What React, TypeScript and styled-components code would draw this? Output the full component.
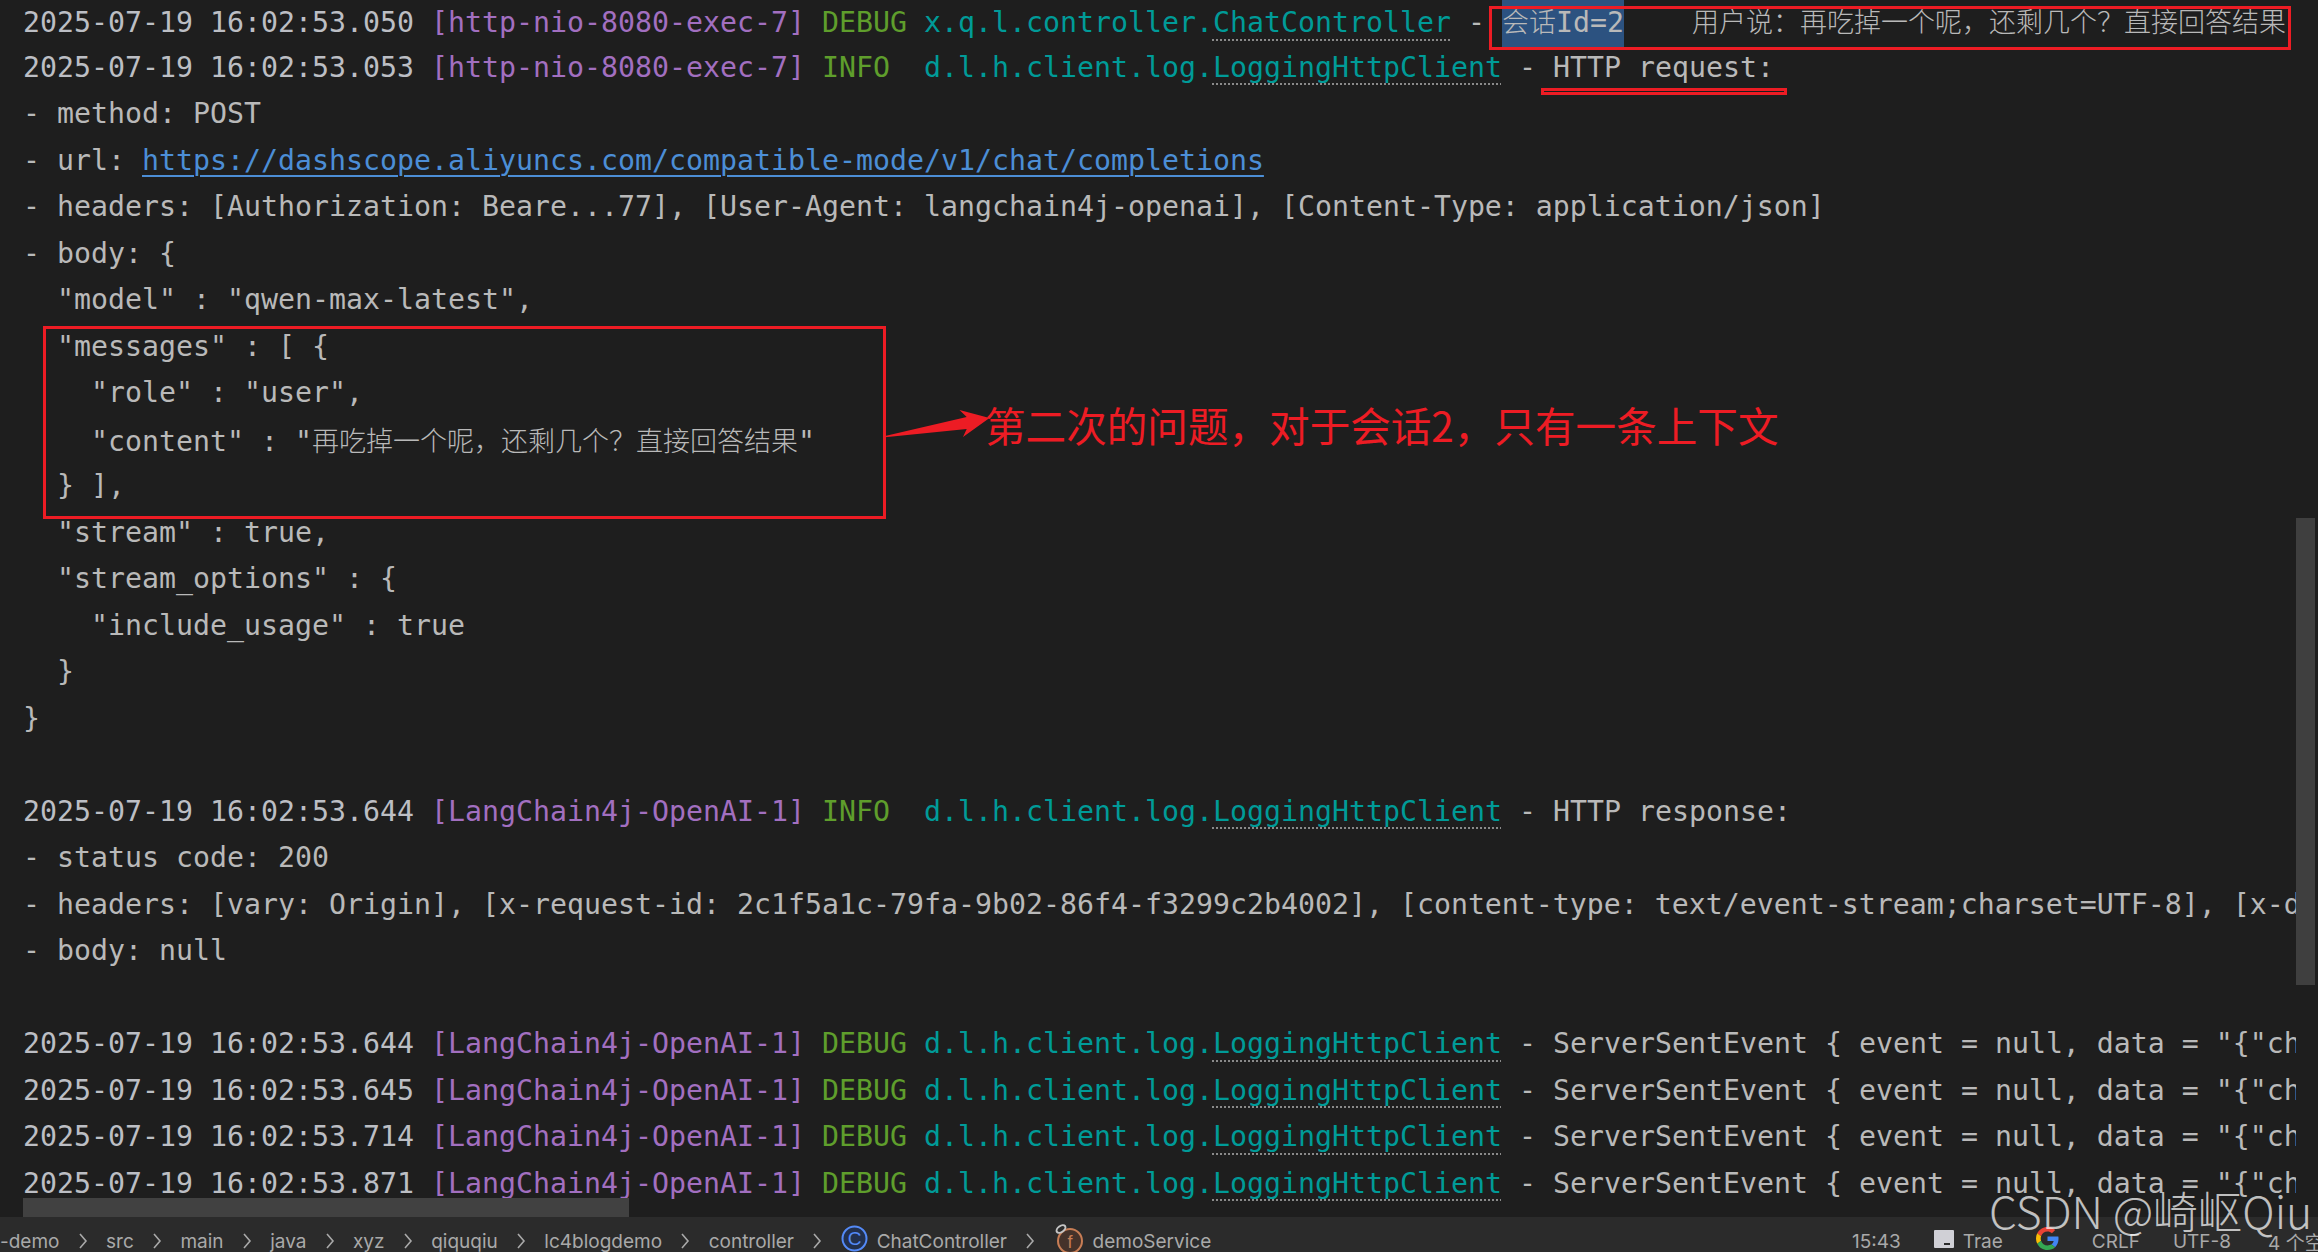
import React from "react";
import styled, { createGlobalStyle } from "styled-components";

const GlobalStyle = createGlobalStyle`
  html, body {
    margin: 0;
    padding: 0;
    width: 2318px;
    height: 1252px;
    overflow: hidden;
    background: #1e1e1e;
  }
`;

const Screen = styled.div`
  position: relative;
  display: flex;
  flex-direction: column;
  width: 2318px;
  height: 1252px;
  overflow: hidden;
  background: #1e1e1e;
`;

const Editor = styled.div`
  position: relative;
  flex: 0 0 1217px;
  overflow: hidden;
`;

const Lines = styled.div`
  width: 2296px;
  height: 1230px;
  margin-top: -2px;
  padding-left: 23px;
  box-sizing: border-box;
  overflow: hidden;
  font-family: "DejaVu Sans Mono", "Noto Sans CJK SC", monospace;
  font-size: 28.24px;
  line-height: 46.5px;
  color: #b9b9b9;
`;

const Row = styled.div`
  height: 46.5px;
  white-space: pre;
`;

const Time = styled.span`
  color: #bcbec4;
`;

const Thread = styled.span`
  color: #a26fc0;
`;

const Level = styled.span`
  color: #5f9e2c;
`;

const Logger = styled.span`
  color: #009b98;
`;

const LoggerClass = styled.span`
  color: #009b98;
  text-decoration: underline dotted #8a8a8a 2px;
  text-underline-offset: 7px;
`;

const Link = styled.span`
  color: #4c8ed6;
  text-decoration: underline #4c8ed6 2px;
  text-underline-offset: 5px;
`;

const Cjk = styled.span`
  font-family: "Noto Sans CJK SC", sans-serif;
  font-size: 27px;
  font-weight: 300;
`;

const Selected = styled.span`
  display: inline-block;
  background: #2c5280;
`;

const HScroll = styled.div`
  position: absolute;
  left: 23px;
  top: 1198px;
  width: 606px;
  height: 19px;
  background: #414141;
`;

const VScroll = styled.div`
  position: absolute;
  left: 2296px;
  top: 518px;
  width: 19px;
  height: 467px;
  background: #3f3f3f;
`;

const RedBox = styled.div<{ $x: number; $y: number; $w: number; $h: number }>`
  position: absolute;
  left: ${(p) => p.$x}px;
  top: ${(p) => p.$y}px;
  width: ${(p) => p.$w}px;
  height: ${(p) => p.$h}px;
  box-sizing: border-box;
  border: 3px solid #ed1c24;
`;

const ArrowSvg = styled.svg`
  position: absolute;
  left: 880px;
  top: 405px;
`;

const Note = styled.div`
  position: absolute;
  left: 985px;
  top: 397px;
  font-family: "Noto Sans CJK SC", sans-serif;
  font-size: 40.6px;
  line-height: 56px;
  font-weight: 400;
  color: #ed1c24;
  white-space: nowrap;
`;

const Watermark = styled.div`
  position: absolute;
  left: 1989px;
  top: 1180px;
  font-family: "Noto Sans CJK SC", sans-serif;
  font-size: 44.5px;
  line-height: 60px;
  font-weight: 300;
  color: rgba(255, 255, 255, 0.72);
  white-space: nowrap;
`;

const StatusBar = styled.div`
  flex: 0 0 35px;
  box-sizing: border-box;
  padding-top: 13px;
  display: flex;
  align-items: center;
  overflow: hidden;
  background: #2b2b2b;
  font-family: Inter, "Noto Sans CJK SC", sans-serif;
  font-size: 19px;
  color: #a9a9a9;
  white-space: nowrap;
`;

const Crumbs = styled.div`
  flex: 0 0 1852px;
  display: flex;
  align-items: center;
  gap: 18.3px;
`;

const Crumb = styled.span`
  display: flex;
  align-items: center;
  gap: 9px;
`;

const Status = styled.div`
  display: flex;
  align-items: center;
  gap: 33px;
  flex-shrink: 0;
`;

const StatusItem = styled.span`
  display: flex;
  align-items: center;
  gap: 9px;
`;

const IndentStatus = styled.span`
  margin-left: 4px;
`;

const IconSvg = styled.svg`
  margin-top: -5px;
  flex-shrink: 0;
`;

const IconText = styled.text`
  font-family: "Liberation Sans", sans-serif;
`;

const Chevron = () => (
  <svg width="10" height="18" viewBox="0 0 10 18" fill="none">
    <path d="M2 2l6 7-6 7" stroke="#a9a9a9" strokeWidth="1.6" />
  </svg>
);

const ClassIcon = () => (
  <IconSvg width="27" height="27" viewBox="0 0 27 27">
    <circle cx="13.5" cy="13.5" r="12" fill="#22304d" stroke="#548af7" strokeWidth="2" />
    <IconText x="13.5" y="20" fontSize="19" textAnchor="middle" fill="#548af7">C</IconText>
  </IconSvg>
);

const MethodIcon = () => (
  <IconSvg width="30" height="32" viewBox="0 0 30 32">
    <circle cx="16" cy="18" r="12" fill="#45322a" stroke="#c77d55" strokeWidth="2" />
    <IconText x="16" y="24.5" fontSize="18" textAnchor="middle" fill="#c77d55">f</IconText>
    <ellipse cx="7" cy="6" rx="5" ry="3" transform="rotate(-35 7 6)" fill="#2b2b2b" stroke="#c4c4c4" strokeWidth="2" />
  </IconSvg>
);

const TraeIcon = () => (
  <IconSvg width="20" height="18" viewBox="0 0 20 18">
    <rect width="20" height="18" rx="1" fill="#d0d0d6" />
    <rect x="10" y="13" width="6" height="2" fill="#2b2b2b" />
  </IconSvg>
);

const GoogleIcon = () => (
  <IconSvg width="23" height="23" viewBox="0 0 48 48">
    <path fill="#ea4335" d="M24 9.500c3.500 0 6.700 1.200 9.200 3.600l6.900-6.900C35.900 2.400 30.500 0 24 0 14.600 0 6.500 5.400 2.600 13.200l8 6.200C12.500 13.600 17.800 9.500 24 9.500z" />
    <path fill="#4285f4" d="M47 24.500c0-1.600-.1-3.100-.4-4.500H24v9h12.900c-.6 3-2.200 5.500-4.800 7.200l7.700 6C44.300 37.800 47 31.800 47 24.500z" />
    <path fill="#fbbc05" d="M10.600 28.600c-.5-1.400-.8-3-.8-4.600s.3-3.200.8-4.600l-8-6.200C.9 16.500 0 20.100 0 24s.9 7.500 2.600 10.800l8-6.200z" />
    <path fill="#34a853" d="M24 48c6.500 0 11.900-2.100 15.800-5.800l-7.700-6c-2.100 1.400-4.900 2.300-8.100 2.300-6.200 0-11.500-4.100-13.400-9.900l-8 6.200C6.500 42.600 14.600 48 24 48z" />
  </IconSvg>
);

type LogProps = {
  time: string;
  thread: string;
  level: string;
  pkg: string;
  cls: string;
  children: React.ReactNode;
};

function LogRow({ time, thread, level, pkg, cls, children }: LogProps) {
  return (
    <Row>
      <Time>{time}</Time> <Thread>[{thread}]</Thread> <Level>{level.padEnd(5)}</Level> <Logger>{pkg}</Logger>
      <LoggerClass>{cls}</LoggerClass>
      {children}
    </Row>
  );
}

const HTTP_PKG = "d.l.h.client.log.";
const HTTP_CLS = "LoggingHttpClient";
const SSE_LINE = " - ServerSentEvent { event = null, data = \"{\"ch";
const SSE_THREAD = "LangChain4j-OpenAI-1";
const sseTimes = ["16:02:53.644", "16:02:53.645", "16:02:53.714", "16:02:53.871"];

const crumbs = ["src", "main", "java", "xyz", "qiquqiu", "lc4blogdemo", "controller"];

export default function App() {
  return (
    <Screen>
      <GlobalStyle />
      <Editor>
        <Lines>
          <LogRow time="2025-07-19 16:02:53.050" thread="http-nio-8080-exec-7" level="DEBUG" pkg="x.q.l.controller." cls="ChatController">
            {" - "}
            <Selected><Cjk>会话</Cjk>Id=2</Selected>
            {"    "}
            <Cjk>用户说：再吃掉一个呢，还剩几个？直接回答结果</Cjk>
          </LogRow>
          <LogRow time="2025-07-19 16:02:53.053" thread="http-nio-8080-exec-7" level="INFO" pkg={HTTP_PKG} cls={HTTP_CLS}>
            {" - HTTP request:"}
          </LogRow>
          <Row>- method: POST</Row>
          <Row>- url: <Link>https://dashscope.aliyuncs.com/compatible-mode/v1/chat/completions</Link></Row>
          <Row>- headers: [Authorization: Beare...77], [User-Agent: langchain4j-openai], [Content-Type: application/json]</Row>
          <Row>{"- body: {"}</Row>
          <Row>{'  "model" : "qwen-max-latest",'}</Row>
          <Row>{'  "messages" : [ {'}</Row>
          <Row>{'    "role" : "user",'}</Row>
          <Row>{'    "content" : "'}<Cjk>再吃掉一个呢，还剩几个？直接回答结果</Cjk>"</Row>
          <Row>{"  } ],"}</Row>
          <Row>{'  "stream" : true,'}</Row>
          <Row>{'  "stream_options" : {'}</Row>
          <Row>{'    "include_usage" : true'}</Row>
          <Row>{"  }"}</Row>
          <Row>{"}"}</Row>
          <Row />
          <LogRow time="2025-07-19 16:02:53.644" thread={SSE_THREAD} level="INFO" pkg={HTTP_PKG} cls={HTTP_CLS}>
            {" - HTTP response:"}
          </LogRow>
          <Row>- status code: 200</Row>
          <Row>- headers: [vary: Origin], [x-request-id: 2c1f5a1c-79fa-9b02-86f4-f3299c2b4002], [content-type: text/event-stream;charset=UTF-8], [x-d</Row>
          <Row>- body: null</Row>
          <Row />
          {sseTimes.map((t) => (
            <LogRow key={t} time={`2025-07-19 ${t}`} thread={SSE_THREAD} level="DEBUG" pkg={HTTP_PKG} cls={HTTP_CLS}>
              {SSE_LINE}
            </LogRow>
          ))}
        </Lines>
        <HScroll />
        <VScroll />
      </Editor>
      <StatusBar>
        <Crumbs>
          <span>-demo</span>
          <Chevron />
          {crumbs.map((c) => (
            <React.Fragment key={c}>
              <span>{c}</span>
              <Chevron />
            </React.Fragment>
          ))}
          <Crumb><ClassIcon />ChatController</Crumb>
          <Chevron />
          <Crumb><MethodIcon />demoService</Crumb>
        </Crumbs>
        <Status>
          <span>15:43</span>
          <StatusItem><TraeIcon />Trae</StatusItem>
          <GoogleIcon />
          <span>CRLF</span>
          <span>UTF-8</span>
          <IndentStatus>4 个空格</IndentStatus>
        </Status>
      </StatusBar>
      <RedBox $x={1489} $y={6} $w={802} $h={44} />
      <RedBox $x={1541} $y={88} $w={246} $h={7} />
      <RedBox $x={43} $y={326} $w={843} $h={193} />
      <ArrowSvg width="115" height="40" viewBox="0 0 115 40">
        <polygon points="5,31 86.700,12 79.500,5 109.500,13 83,32 86.700,24 5,32.300" fill="#ed1c24" />
      </ArrowSvg>
      <Note>第二次的问题，对于会话2，只有一条上下文</Note>
      <Watermark>CSDN @崎岖Qiu</Watermark>
    </Screen>
  );
}
